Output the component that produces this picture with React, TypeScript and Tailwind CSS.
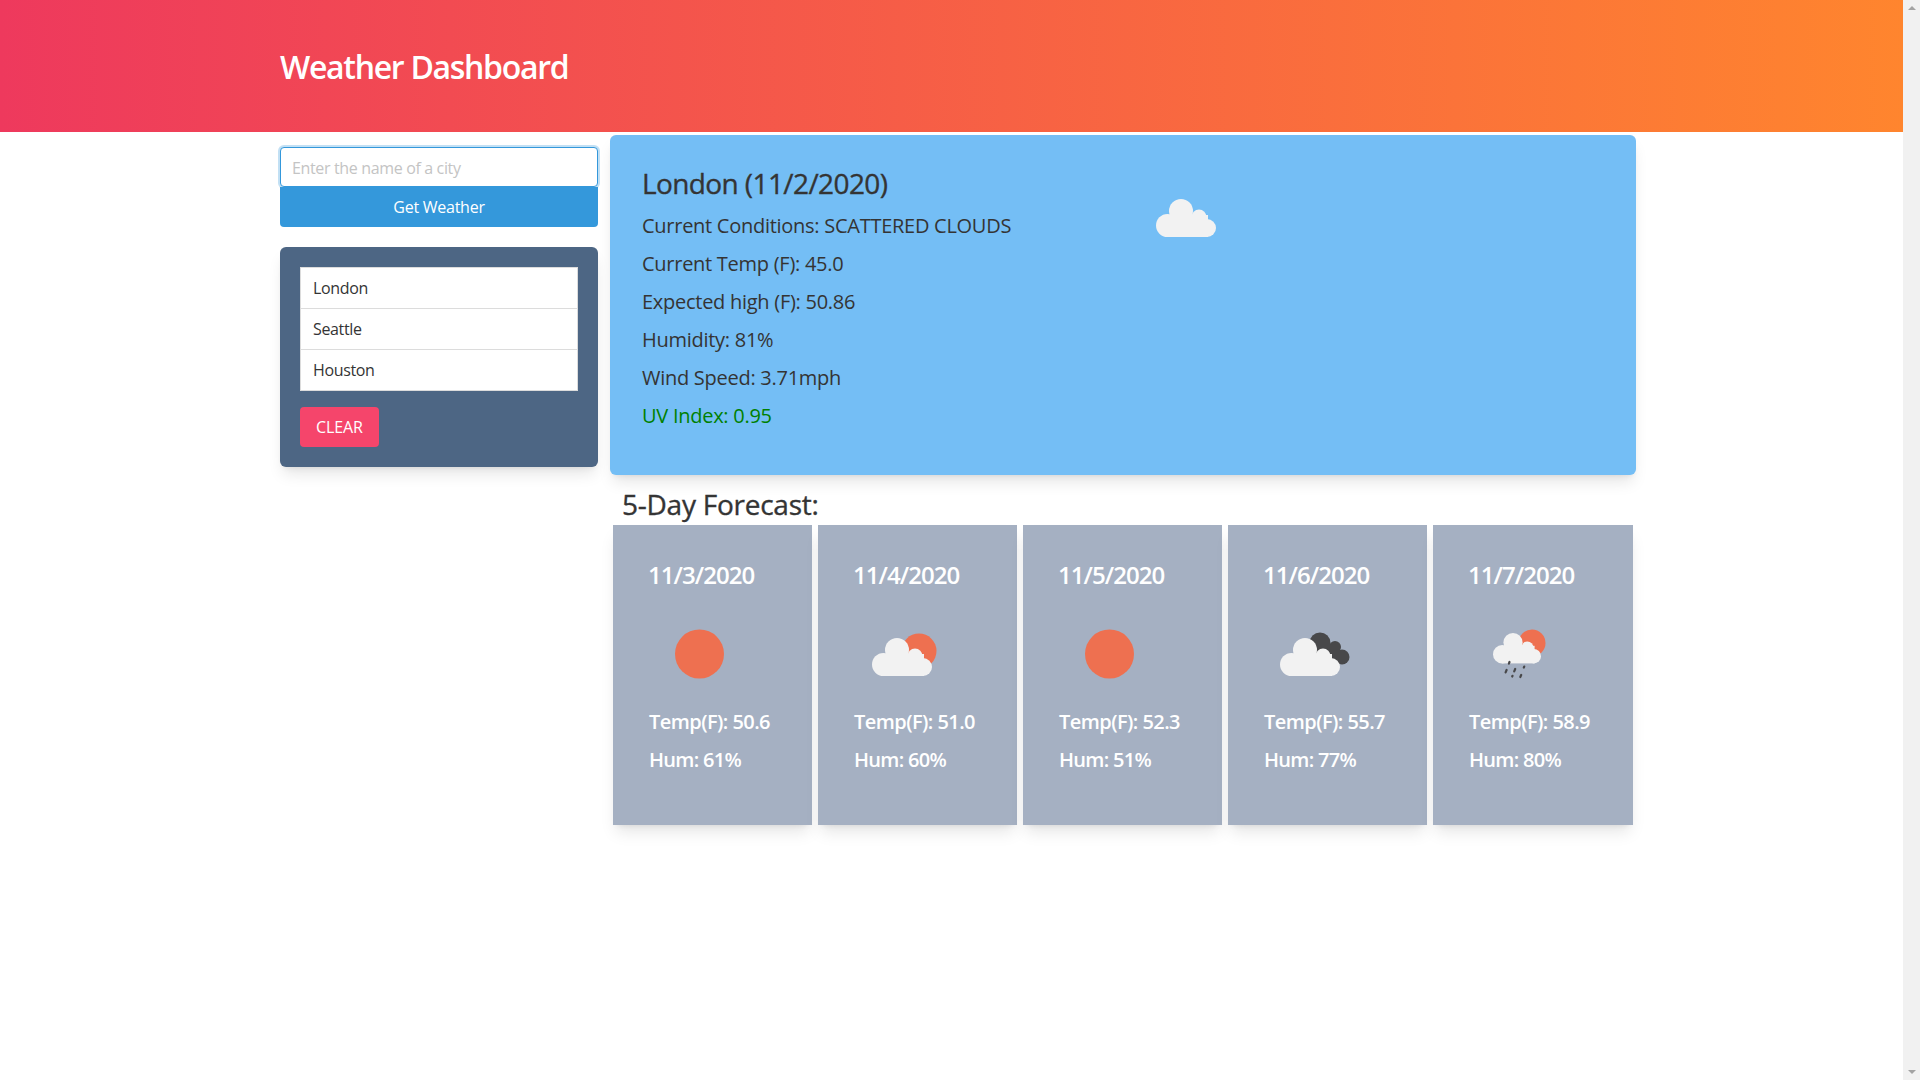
const font = "font-['Open_Sans','Noto_Sans',sans-serif]";

const forecast = [
  { date: '11/3/2020', icon: 'sun', temp: '50.6', hum: '61%' },
  { date: '11/4/2020', icon: 'partly', temp: '51.0', hum: '60%' },
  { date: '11/5/2020', icon: 'sun', temp: '52.3', hum: '51%' },
  { date: '11/6/2020', icon: 'broken', temp: '55.7', hum: '77%' },
  { date: '11/7/2020', icon: 'rain', temp: '58.9', hum: '80%' },
];

function CloudShape() {
  return (
    <g fill="#f2f2f2">
      <circle cx="29.5" cy="60.5" r="11.5" />
      <circle cx="43" cy="46" r="12" />
      <circle cx="61" cy="52" r="7.5" />
      <circle cx="69" cy="63" r="9" />
      <rect x="29" y="50" width="41" height="22" />
    </g>
  );
}

function WeatherIcon({ name }: { name: string }) {
  return (
    <svg className="h-[100px] w-[100px] shrink-0" viewBox="0 0 100 100" aria-hidden="true">
      {name === 'sun' && <circle cx="50.5" cy="50" r="24.5" fill="#ee7050" />}
      {name === 'cloud' && <CloudShape />}
      {name === 'partly' && (
        <>
          <circle cx="65" cy="47" r="17.5" fill="#ee7050" />
          <CloudShape />
        </>
      )}
      {name === 'broken' && (
        <>
          <g fill="#48484a">
            <circle cx="56" cy="39" r="10.5" />
            <circle cx="71" cy="43" r="6" />
            <circle cx="78" cy="53" r="7.5" />
            <rect x="56" y="40" width="20" height="18" />
          </g>
          <g transform="translate(-2 0)">
            <CloudShape />
          </g>
        </>
      )}
      {name === 'rain' && (
        <>
          <circle cx="63" cy="39" r="13.5" fill="#ee7050" />
          <g transform="translate(9.6 1.8) scale(0.8)">
            <CloudShape />
          </g>
          <g stroke="#48484a" strokeWidth="2.2" strokeLinecap="round">
            <path d="M40.5 58l-.6 1.6" />
            <path d="M37.6 66l-1 2.4" />
            <path d="M46.2 65l-1 2.4" />
            <path d="M55.2 62.6l-.4 1" />
            <path d="M43.5 71.8l-.3.7" />
            <path d="M52.2 71l-.9 2" />
          </g>
        </>
      )}
    </svg>
  );
}

export default function App() {
  return (
    <div className={`flex h-[1080px] w-[1920px] overflow-hidden bg-white text-[#343434] ${font}`}>
      <div className="w-[1903px] shrink-0">
        <header className="flex h-[132px] items-center bg-linear-to-r/srgb from-[#ee395d] to-[#ff852e] pl-[280px] pt-[2px]">
          <h1 className="text-[32px] font-semibold tracking-[-1.3px] text-white">Weather Dashboard</h1>
        </header>

        <div className="ml-[280px] mt-[3px] flex w-[1356px] gap-3">
          <aside className="w-[318px] shrink-0 pt-3">
            <input
              placeholder="Enter the name of a city"
              className="block h-[40px] w-full rounded border border-[#3498db] bg-white px-[11px] pt-[2px] text-[16px] tracking-[-0.35px] shadow-[0_0_0_2px_rgba(52,152,219,0.3)] outline-none placeholder:text-[#c4c4c4]"
            />
            <button className="relative block h-[40px] w-full rounded-b bg-[#3498db] text-[16px] tracking-[-0.25px] text-white">
              Get Weather
            </button>

            <div className="mt-5 rounded-md bg-[#4d6684] p-5 shadow-lg">
              <ul className="border border-[#dcdcdc] bg-white text-[16px] tracking-[-0.35px]">
                <li className="flex h-[41px] items-center border-b border-[#dcdcdc] px-3">London</li>
                <li className="flex h-[41px] items-center border-b border-[#dcdcdc] px-3">Seattle</li>
                <li className="flex h-[40px] items-center px-3">Houston</li>
              </ul>
              <button className="mt-4 block h-[40px] w-[79px] rounded bg-[#f5456b] text-[16px] tracking-[-0.1px] text-white">CLEAR</button>
            </div>
          </aside>

          <main className="w-[1026px] shrink-0">
            <section className="flex h-[340px] rounded-md bg-[#74bef5] pl-8 pt-[30px] shadow-lg">
              <div className="w-[514px] shrink-0">
                <h3 className="text-[28px] leading-[36px] tracking-[-0.6px] [-webkit-text-stroke:0.35px_#343434]">London (11/2/2020)</h3>
                <div className="mt-[10px] space-y-[8px] text-[20px] leading-[30px] tracking-[-0.27px]">
                  <p>Current Conditions: SCATTERED CLOUDS</p>
                  <p>Current Temp (F): 45.0</p>
                  <p>Expected high (F): 50.86</p>
                  <p>Humidity: 81%</p>
                  <p>Wind Speed: 3.71mph</p>
                  <p className="text-[#008000]">UV Index: 0.95</p>
                </div>
              </div>
              <div className="-ml-[18px]">
                <WeatherIcon name="cloud" />
              </div>
            </section>

            <h2 className="ml-3 mt-[8px] text-[28px] leading-[42px] tracking-[-0.25px] [-webkit-text-stroke:0.35px_#343434]">5-Day Forecast:</h2>
            <div className="ml-[3px] flex gap-[6px]">
              {forecast.map((day) => (
                <div key={day.date} className="h-[300px] w-[199px] bg-[#a5b0c2] pl-9 pt-[35px] text-white shadow-lg last:w-[200px]">
                  <h4 className="-ml-px text-[24px] font-semibold leading-[29px] tracking-[-0.95px]">{day.date}</h4>
                  <div className="mt-[15px]">
                    <WeatherIcon name={day.icon} />
                  </div>
                  <p className="mt-[3px] text-[20px] font-semibold leading-[30px] tracking-[-0.55px]">Temp(F): {day.temp}</p>
                  <p className="mt-2 text-[20px] font-semibold leading-[30px] tracking-[-0.7px]">Hum: {day.hum}</p>
                </div>
              ))}
            </div>
          </main>
        </div>
      </div>

      {/* scrollbar */}
      <div className="flex w-[17px] shrink-0 flex-col items-center justify-between bg-[#f1f1f1] py-[6px]">
        <div className="h-0 w-0 border-x-[4px] border-b-[4px] border-x-transparent border-b-[#a3a3a3]" />
        <div className="h-0 w-0 border-x-[4px] border-t-[4px] border-x-transparent border-t-[#a3a3a3]" />
      </div>
    </div>
  );
}
